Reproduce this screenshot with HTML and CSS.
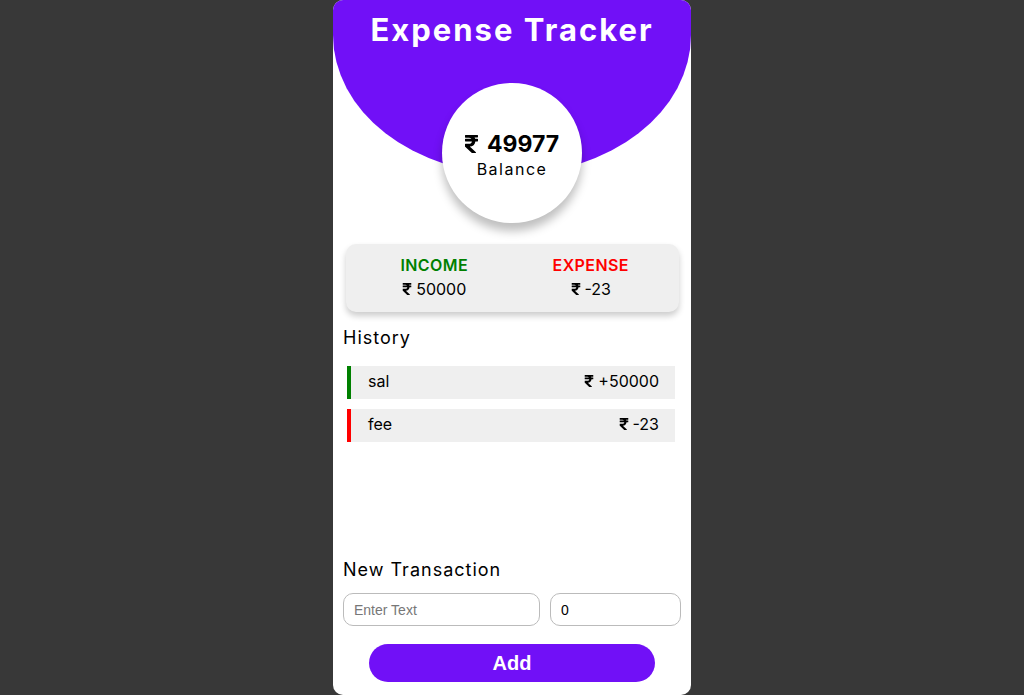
FILE: index.html
```html
<!DOCTYPE html>
<html lang="en">
<head>
<meta charset="utf-8">
<title>Expense Tracker</title>
<link rel="stylesheet" href="styles.css">
</head>
<body>
<svg class="defs" width="0" height="0" aria-hidden="true">
  <symbol id="rupee" viewBox="0 32 320 448">
    <path d="M308 96c6.627 0 12-5.373 12-12V44c0-6.627-5.373-12-12-12H12C5.373 32 0 37.373 0 44v44.748c0 6.627 5.373 12 12 12h85.28c27.308 0 48.261 9.958 60.97 27.252H12c-6.627 0-12 5.373-12 12v40c0 6.627 5.373 12 12 12h158.757c-6.217 36.086-32.961 58.632-74.757 58.632H12c-6.627 0-12 5.373-12 12v53.012c0 3.349 1.4 6.546 3.861 8.818l165.052 152.356a12.001 12.001 0 0 0 8.139 3.182h82.562c10.924 0 16.166-13.408 8.139-20.818L116.871 319.906c76.499-2.34 131.144-53.395 138.318-127.906H308c6.627 0 12-5.373 12-12v-40c0-6.627-5.373-12-12-12h-58.69c-3.486-11.541-8.280-22.246-14.252-32H308z"/>
  </symbol>
</svg>
<div class="app">
  <header class="hero">
    <h1 class="title">Expense Tracker</h1>
  </header>

  <div class="balance">
    <div class="balance-amount"><svg class="rupee rupee-lg"><use href="#rupee"/></svg>49977</div>
    <div class="balance-label">Balance</div>
  </div>

  <div class="summary">
    <div class="summary-col">
      <div class="summary-label income">INCOME</div>
      <div class="summary-value"><svg class="rupee"><use href="#rupee"/></svg>50000</div>
    </div>
    <div class="summary-col">
      <div class="summary-label expense">EXPENSE</div>
      <div class="summary-value"><svg class="rupee"><use href="#rupee"/></svg>-23</div>
    </div>
  </div>

  <section class="history">
    <h2 class="heading">History</h2>
    <ul class="list">
      <li class="item item-plus"><span>sal</span><span class="amount"><svg class="rupee"><use href="#rupee"/></svg>+50000</span></li>
      <li class="item item-minus"><span>fee</span><span class="amount"><svg class="rupee"><use href="#rupee"/></svg>-23</span></li>
    </ul>
  </section>

  <section class="new">
    <h2 class="heading">New Transaction</h2>
    <div class="inputs">
      <input class="field field-text" type="text" placeholder="Enter Text">
      <input class="field field-num" type="number" value="0">
    </div>
    <button class="add-btn">Add</button>
  </section>
</div>
</body>
</html>
```

FILE: styles.css
```css
* { box-sizing: border-box; }

html, body { height: 100%; }

body {
  margin: 0;
  background: #383838;
  display: flex;
  justify-content: center;
  font-family: "Inter", "Open Sans", sans-serif;
  color: #000;
}

.defs { position: absolute; width: 0; height: 0; }

.app {
  width: 358px;
  height: 695px;
  background: #fff;
  border-radius: 10px;
  overflow: hidden;
  display: flex;
  flex-direction: column;
}

.hero {
  height: 174px;
  flex: none;
  background: #7110f7;
  border-radius: 0 0 179px 179px / 0 0 139px 139px;
  display: flex;
  justify-content: center;
}

.title {
  margin: 10px 0 0;
  color: #fff;
  font-size: 31px;
  font-weight: 700;
  letter-spacing: 2px;
  line-height: 40px;
}

.rupee {
  width: 10px;
  height: 12px;
  fill: currentColor;
  margin-right: 4px;
  flex: none;
}

.rupee-lg {
  width: 13px;
  height: 20px;
  margin-right: 9px;
}

.balance {
  flex: none;
  width: 140px;
  height: 140px;
  margin: -91px auto 0;
  border-radius: 50%;
  background: #fff;
  box-shadow: 0 8px 10px rgba(0, 0, 0, 0.25);
  display: flex;
  flex-direction: column;
  align-items: center;
  justify-content: center;
  position: relative;
}

.balance-amount {
  display: flex;
  align-items: center;
  font-size: 23px;
  font-weight: 700;
  line-height: 30px;
  margin-top: 3px;
}

.balance-label {
  font-size: 16px;
  letter-spacing: 1.5px;
  line-height: 24px;
  margin-top: -2px;
}

.summary {
  flex: none;
  margin: 21px 12px 0 13px;
  height: 68px;
  padding: 0 10px 2px;
  background: #efefef;
  border-radius: 10px;
  box-shadow: 0 4px 6px rgba(0, 0, 0, 0.2);
  display: flex;
  align-items: center;
}

.summary-col {
  flex: 1;
  display: flex;
  flex-direction: column;
  align-items: center;
}

.summary-label {
  font-size: 16px;
  font-weight: 600;
  letter-spacing: 0.4px;
  line-height: 22px;
  margin-bottom: 2px;
}

.income { color: #008000; }
.expense { color: #ff0000; }

.summary-value {
  display: flex;
  align-items: center;
  font-size: 16px;
  line-height: 22px;
}

.heading {
  margin: 0;
  font-size: 18px;
  font-weight: 400;
  letter-spacing: 1px;
  line-height: 26px;
  padding-left: 10px;
}

.history {
  flex: 1;
  padding-top: 13px;
}

.list {
  list-style: none;
  margin: 15px 16px 0 14px;
  padding: 0;
  display: flex;
  flex-direction: column;
  gap: 10px;
}

.item {
  height: 33px;
  background: #efefef;
  border-left: 4px solid;
  display: flex;
  align-items: center;
  justify-content: space-between;
  padding: 0 16px 3px 17px;
  font-size: 16px;
}

.item-plus { border-left-color: #008000; }
.item-minus { border-left-color: #ff0000; }

.amount {
  display: flex;
  align-items: center;
}

.new {
  flex: none;
  padding: 0 10px 13px;
}

.new .heading { padding-left: 0; }

.inputs {
  display: flex;
  gap: 10px;
  margin-top: 10px;
}

.field {
  height: 33px;
  border: 1px solid #bbb;
  border-radius: 10px;
  padding: 0 10px;
  font-family: "Liberation Sans", Arial, sans-serif;
  font-size: 14px;
  color: #000;
  outline: none;
}

.field::placeholder { color: #777; }

.field-text { width: 197px; }
.field-num { width: 131px; }

.add-btn {
  display: block;
  width: 286px;
  height: 38px;
  margin: 18px auto 0;
  border: none;
  border-radius: 19px;
  background: #7110f7;
  color: #fff;
  font-family: "Liberation Sans", Arial, sans-serif;
  font-size: 20px;
  font-weight: 700;
}
```
